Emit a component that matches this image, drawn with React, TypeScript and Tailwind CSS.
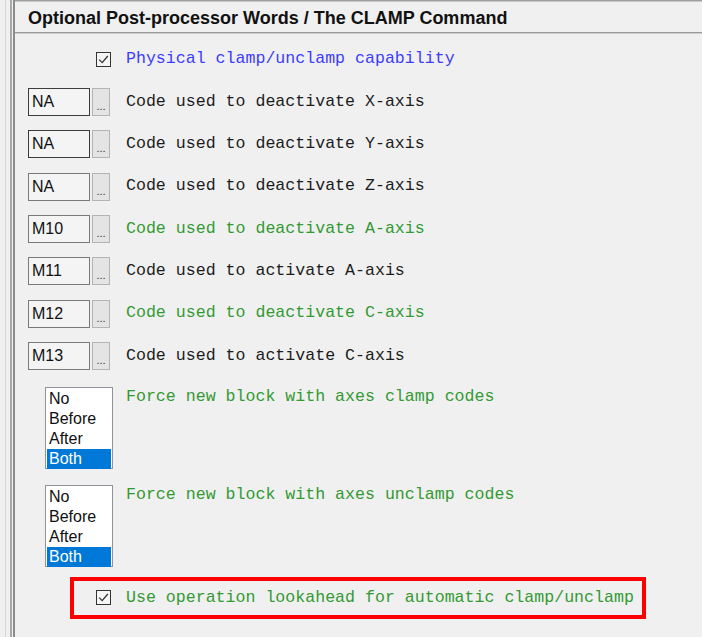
import React from "react";

const mono = { fontFamily: '"Liberation Mono", "Courier New", monospace' };

function Check() {
  return (
    <div className="w-[15px] h-[15px] border border-[#333333] bg-[#f5f5f5] flex items-center justify-center">
      <svg width="11" height="11" viewBox="0 0 11 11">
        <path d="M1.2 5.6 L4.2 8.6 L9.8 2" fill="none" stroke="#333" strokeWidth="1.3" />
      </svg>
    </div>
  );
}

function CodeRow({ code, label, color, dark }: { code: string; label: string; color: string; dark?: boolean }) {
  return (
    <div className="flex items-center h-[28px]">
      <div
        className={`w-[62px] h-[28px] border ${dark ? "border-[#3c3c3c]" : "border-[#7a7a7a]"} bg-[#f4f4f4] flex items-center pl-[3px] text-[16px] text-[#111]`}
        style={{ fontFamily: '"Liberation Sans", Arial, sans-serif' }}
      >
        {code}
      </div>
      <div className="ml-[2px] w-[18px] h-[28px] border border-[#b4b4b4] bg-[#e4e4e4] flex items-end justify-center pb-[3px] text-[11px] leading-none text-[#333]" style={{ fontFamily: '"Liberation Sans", Arial, sans-serif' }}>
        ...
      </div>
      <div className="ml-[16px] text-[16.6px] leading-none" style={{ ...mono, color }}>
        {label}
      </div>
    </div>
  );
}

function ListBox() {
  const items = ["No", "Before", "After", "Both"];
  return (
    <div className="w-[68px] h-[82px] border border-[#8f949c] bg-white p-px" style={{ fontFamily: '"Liberation Sans", Arial, sans-serif' }}>
      {items.map((it) => (
        <div
          key={it}
          className={`h-[20px] pl-[2px] text-[16px] leading-[20px] ${it === "Both" ? "bg-[#0078d7] text-white" : "text-[#111]"}`}
        >
          {it}
        </div>
      ))}
    </div>
  );
}

export default function App() {
  const black = "#1c1c1c";
  const green = "#339a33";
  const blue = "#3d3dff";
  return (
    <div className="w-[702px] h-[637px] bg-[#f0f0f0] flex overflow-hidden">
      {/* left edges */}
      <div className="w-[5px] h-full" />
      <div className="w-px h-full bg-[#d6d6d6]" />
      <div className="w-[4px] h-full" />
      <div className="w-[2px] h-full bg-[#a8a8a8]" />
      <div className="w-[1px] h-full" />
      <div className="w-[2px] h-full bg-[#8c8c8c]" />
      <div className="flex-1 flex flex-col">
        <div className="h-px bg-[#a0a0a0]" />
        <div className="h-px bg-[#c8c8c8]" />
        <div
          className="h-[30px] flex items-center pl-[13px] pt-[2px] text-[18px] text-[#111]"
          style={{ fontFamily: '"Liberation Sans", Tahoma, sans-serif', fontWeight: 700 }}
        >
          Optional Post-processor Words / The CLAMP Command
        </div>
        <div className="h-px bg-[#9a9a9a]" />
        <div className="h-px bg-[#cfcfcf]" />
        <div className="pl-[13px] flex flex-col">
          <div className="mt-[18px] flex items-center h-[15px] pl-[68px]">
            <Check />
            <div className="ml-[15px] text-[16.6px] leading-none" style={{ ...mono, color: blue }}>
              Physical clamp/unclamp capability
            </div>
          </div>
          <div className="mt-[21px] flex flex-col gap-[14.33px]">
            <CodeRow code="NA" label="Code used to deactivate X-axis" color={black} dark />
            <CodeRow code="NA" label="Code used to deactivate Y-axis" color={black} dark />
            <CodeRow code="NA" label="Code used to deactivate Z-axis" color={black} />
            <CodeRow code="M10" label="Code used to deactivate A-axis" color={green} />
            <CodeRow code="M11" label="Code used to activate A-axis" color={black} />
            <CodeRow code="M12" label="Code used to deactivate C-axis" color={green} />
            <CodeRow code="M13" label="Code used to activate C-axis" color={black} />
          </div>
          <div className="mt-[17px] flex pl-[17px]">
            <ListBox />
            <div className="ml-[13px] mt-[2px] text-[16.6px] leading-none" style={{ ...mono, color: green }}>
              Force new block with axes clamp codes
            </div>
          </div>
          <div className="mt-[16px] flex pl-[17px]">
            <ListBox />
            <div className="ml-[13px] mt-[2px] text-[16.6px] leading-none" style={{ ...mono, color: green }}>
              Force new block with axes unclamp codes
            </div>
          </div>
          <div className="mt-[10px] ml-[42px] w-[576px] h-[42px] border-[4px] border-[#ff0000] flex items-center pl-[22px]">
            <Check />
            <div className="ml-[15px] text-[16.6px] leading-none" style={{ ...mono, color: green }}>
              Use operation lookahead for automatic clamp/unclamp
            </div>
          </div>
        </div>
      </div>
    </div>
  );
}
